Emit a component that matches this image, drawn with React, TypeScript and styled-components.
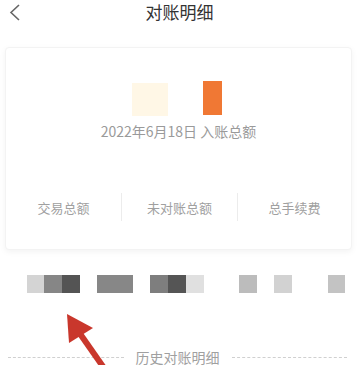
import React from 'react';
import styled, { createGlobalStyle } from 'styled-components';

const GlobalStyle = createGlobalStyle`
  body {
    margin: 0;
    background: #ffffff;
    font-family: "Noto Sans CJK SC", "Noto Sans", sans-serif;
  }
`;

interface Cell {
  w: number;
  c: string;
  gap?: number;
}

// pixelated (blurred) tab row under the card
const mosaic: Cell[] = [
  { w: 17, c: '#d4d4d4' },
  { w: 18, c: '#868686' },
  { w: 18, c: '#545454' },
  { w: 36, c: '#878787', gap: 17 },
  { w: 18, c: '#7e7e7e', gap: 17 },
  { w: 18, c: '#555555' },
  { w: 18, c: '#e0e0e0' },
  { w: 18, c: '#bcbcbc', gap: 35 },
  { w: 18, c: '#d2d2d2', gap: 17 },
  { w: 17, c: '#c3c3c3', gap: 36 },
];

const App: React.FC = () => {
  return (
    <Page>
      <GlobalStyle />
      <Header>
        <BackButton>
          <svg width="14" height="20" viewBox="0 0 14 20">
            <polyline points="10,3 2,10.5 10,18" fill="none" stroke="#666" strokeWidth="1.6" />
          </svg>
        </BackButton>
        <Title>对账明细</Title>
        <span />
      </Header>

      <Card>
        <AmountRow>
          <Blur $w={36} $h={33} $c="#fff7e6" $top={2} />
          <Blur $w={19} $h={34} $c="#f07834" />
        </AmountRow>
        <DateText>2022年6月18日 入账总额</DateText>
        <StatRow>
          <Stat>交易总额</Stat>
          <Stat $divider>未对账总额</Stat>
          <Stat $divider>总手续费</Stat>
        </StatRow>
      </Card>

      <MosaicRow>
        {mosaic.map((m, i) => (
          <MosaicCell key={i} $w={m.w} $c={m.c} $gap={m.gap ?? 0} />
        ))}
      </MosaicRow>

      <HistoryRow>
        <Dash />
        <HistoryText>历史对账明细</HistoryText>
        <Dash />
      </HistoryRow>

      <Arrow width="361" height="365" viewBox="0 0 361 365">
        <line x1="104" y1="368" x2="76" y2="328" stroke="#c9372c" strokeWidth="6" />
        <polygon points="67,314 93,328 69,343" fill="#c9372c" />
      </Arrow>
    </Page>
  );
};

const Page = styled.div`
  position: relative;
  width: 361px;
  height: 365px;
  overflow: hidden;
  background: #ffffff;
`;

const Header = styled.div`
  display: grid;
  grid-template-columns: 40px 1fr 40px;
  align-items: center;
  height: 24px;
`;

const BackButton = styled.div`
  display: flex;
  align-items: center;
  padding-left: 9px;
  height: 24px;
`;

const Title = styled.div`
  text-align: center;
  font-size: 17px;
  line-height: 24px;
  color: #333333;
  margin-left: -2px;
`;

const Card = styled.div`
  margin: 23px 9px 0 5px;
  height: 203px;
  box-sizing: border-box;
  padding-top: 33px;
  background: #ffffff;
  border: 1px solid #f3f3f3;
  border-radius: 4px;
  box-shadow: 0 2px 6px rgba(0, 0, 0, 0.05);
  display: flex;
  flex-direction: column;
  align-items: center;
`;

const AmountRow = styled.div`
  display: flex;
  align-items: flex-start;
  gap: 35px;
  height: 35px;
  margin-left: -4px;
`;

const Blur = styled.div<{ $w: number; $h: number; $c: string; $top?: number }>`
  width: ${({ $w }) => $w}px;
  height: ${({ $h }) => $h}px;
  margin-top: ${({ $top }) => $top ?? 0}px;
  background: ${({ $c }) => $c};
`;

const DateText = styled.div`
  margin-top: 5px;
  font-size: 14px;
  line-height: 20px;
  color: #9a9a9a;
`;

const StatRow = styled.div`
  margin-top: 52px;
  width: 100%;
  display: grid;
  grid-template-columns: 115px 116px 1fr;
`;

const Stat = styled.div<{ $divider?: boolean }>`
  height: 28px;
  display: flex;
  align-items: center;
  justify-content: center;
  font-size: 13px;
  color: #a0a0a0;
  border-left: ${({ $divider }) => ($divider ? '1px solid #ececec' : 'none')};
`;

const MosaicRow = styled.div`
  display: flex;
  margin-top: 25px;
  padding-left: 27px;
  height: 18px;
`;

const MosaicCell = styled.div<{ $w: number; $c: string; $gap: number }>`
  width: ${({ $w }) => $w}px;
  height: 18px;
  margin-left: ${({ $gap }) => $gap}px;
  background: ${({ $c }) => $c};
`;

const HistoryRow = styled.div`
  display: flex;
  align-items: center;
  gap: 12px;
  margin-top: 54px;
  padding: 0 14px 0 8px;
  height: 20px;
`;

const Dash = styled.div`
  flex: 1;
  border-top: 1px dashed #d0d0d0;
`;

const HistoryText = styled.div`
  font-size: 14px;
  line-height: 20px;
  color: #a0a0a0;
`;

const Arrow = styled.svg`
  position: absolute;
  left: 0;
  top: 0;
  pointer-events: none;
`;

export default App;
